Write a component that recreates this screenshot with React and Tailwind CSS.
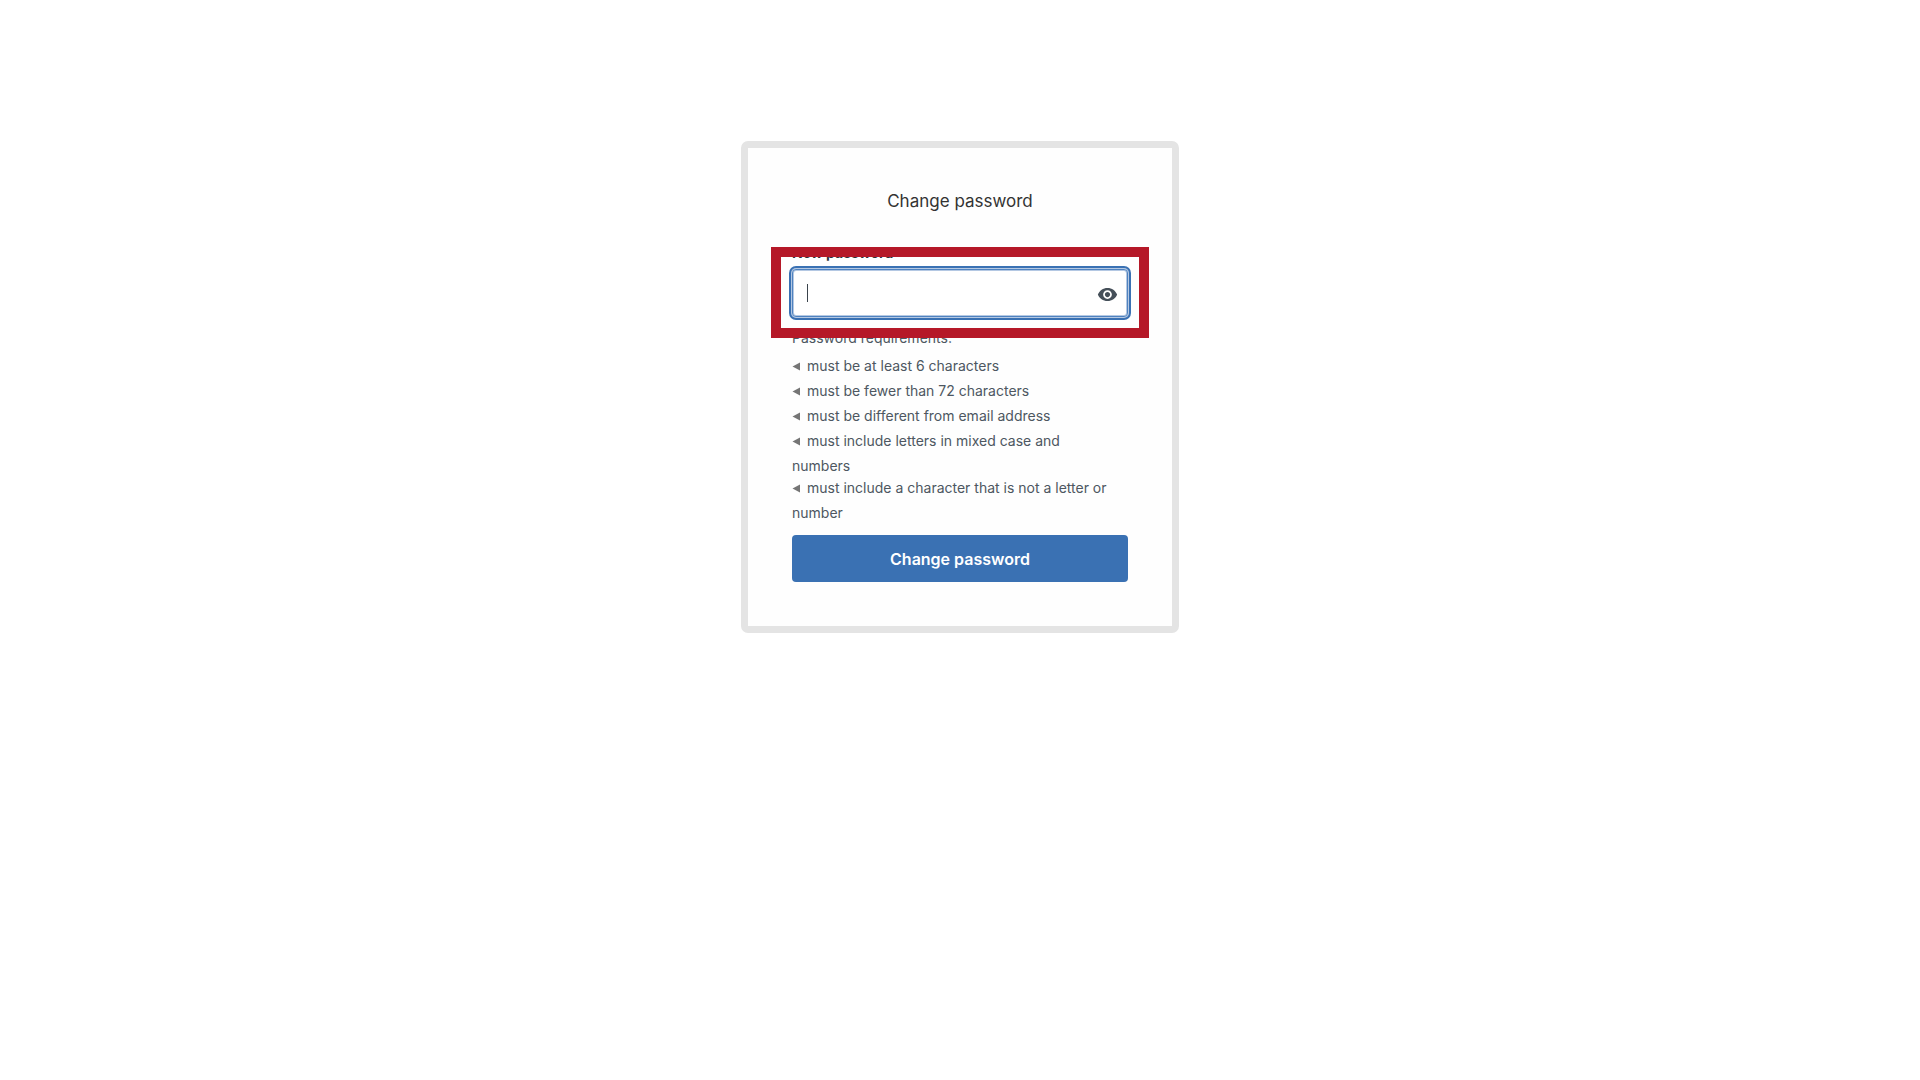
import { useState } from 'react';
import { MdVisibility } from 'react-icons/md';

const requirements = [
  'must be at least 6 characters',
  'must be fewer than 72 characters',
  'must be different from email address',
  'must include letters in mixed case and numbers',
  'must include a character that is not a letter or number',
];

function PasswordField({ value, onChange }) {
  const [visible, setVisible] = useState(false);

  return (
    <div className="relative mt-1.5">
      <input
        id="new-password"
        type={visible ? 'text' : 'password'}
        value={value}
        onChange={(e) => onChange(e.target.value)}
        className="block h-12 w-full rounded border border-[#4f82bf] bg-white pl-3.5 pr-12 text-base text-[#454f59] caret-transparent outline-none shadow-[inset_0_0_0_1px_#b4c8e3,0_0_0_1px_#b4c8e3,0_0_0_3px_#3a71b3]"
      />
      {/* Text cursor */}
      {value === '' && (
        <span className="pointer-events-none absolute left-[15px] top-[15px] h-[18px] w-px bg-[#3a434c]" />
      )}
      <button
        type="button"
        aria-label="Show password"
        onClick={() => setVisible(!visible)}
        className="absolute right-2.5 top-[15px] text-[#454f59]"
      >
        <MdVisibility size={21} />
      </button>
      {/* Highlight frame */}
      <div className="pointer-events-none absolute -inset-x-[21px] -bottom-[21px] -top-[22px] border-10 border-[#b51828]" />
    </div>
  );
}

export default function App() {
  const [password, setPassword] = useState('');

  return (
    <main className="flex min-h-screen items-start justify-center bg-white pt-[141px] font-['Inter',sans-serif]">
      <form
        onSubmit={(e) => e.preventDefault()}
        className="w-full max-w-[438px] rounded-[7px] border-7 border-[#e4e4e4] bg-[#fefefe] px-11 pb-11 pt-10"
      >
        <h1 className="text-center text-[17px] leading-[26px] text-[#333333]">Change password</h1>

        <label htmlFor="new-password" className="mt-[29px] block text-sm leading-5 font-bold text-[#2d333a]">
          New password
        </label>
        <PasswordField value={password} onChange={setPassword} />

        <div className="mt-2.5 text-sm leading-[22px] text-[#4d5761]">
          <p>Password requirements:</p>
          <ul className="mt-1.5 pr-3">
            {requirements.map((item) => (
              <li key={item}>
                <span className="mr-[7px] inline-flex h-[25px] items-center pb-0.5 align-top">
                  <svg width="8" height="9" viewBox="0 0 8 9" fill="#757575" aria-hidden="true">
                    <path d="M0.5 4.5 L8 0.5 V8.5 Z" />
                  </svg>
                </span>
                {item}
              </li>
            ))}
          </ul>
        </div>

        <button
          type="submit"
          className="mt-[11px] h-[47px] w-full rounded bg-[#3a71b3] text-base font-semibold text-white"
        >
          Change password
        </button>
      </form>
    </main>
  );
}
